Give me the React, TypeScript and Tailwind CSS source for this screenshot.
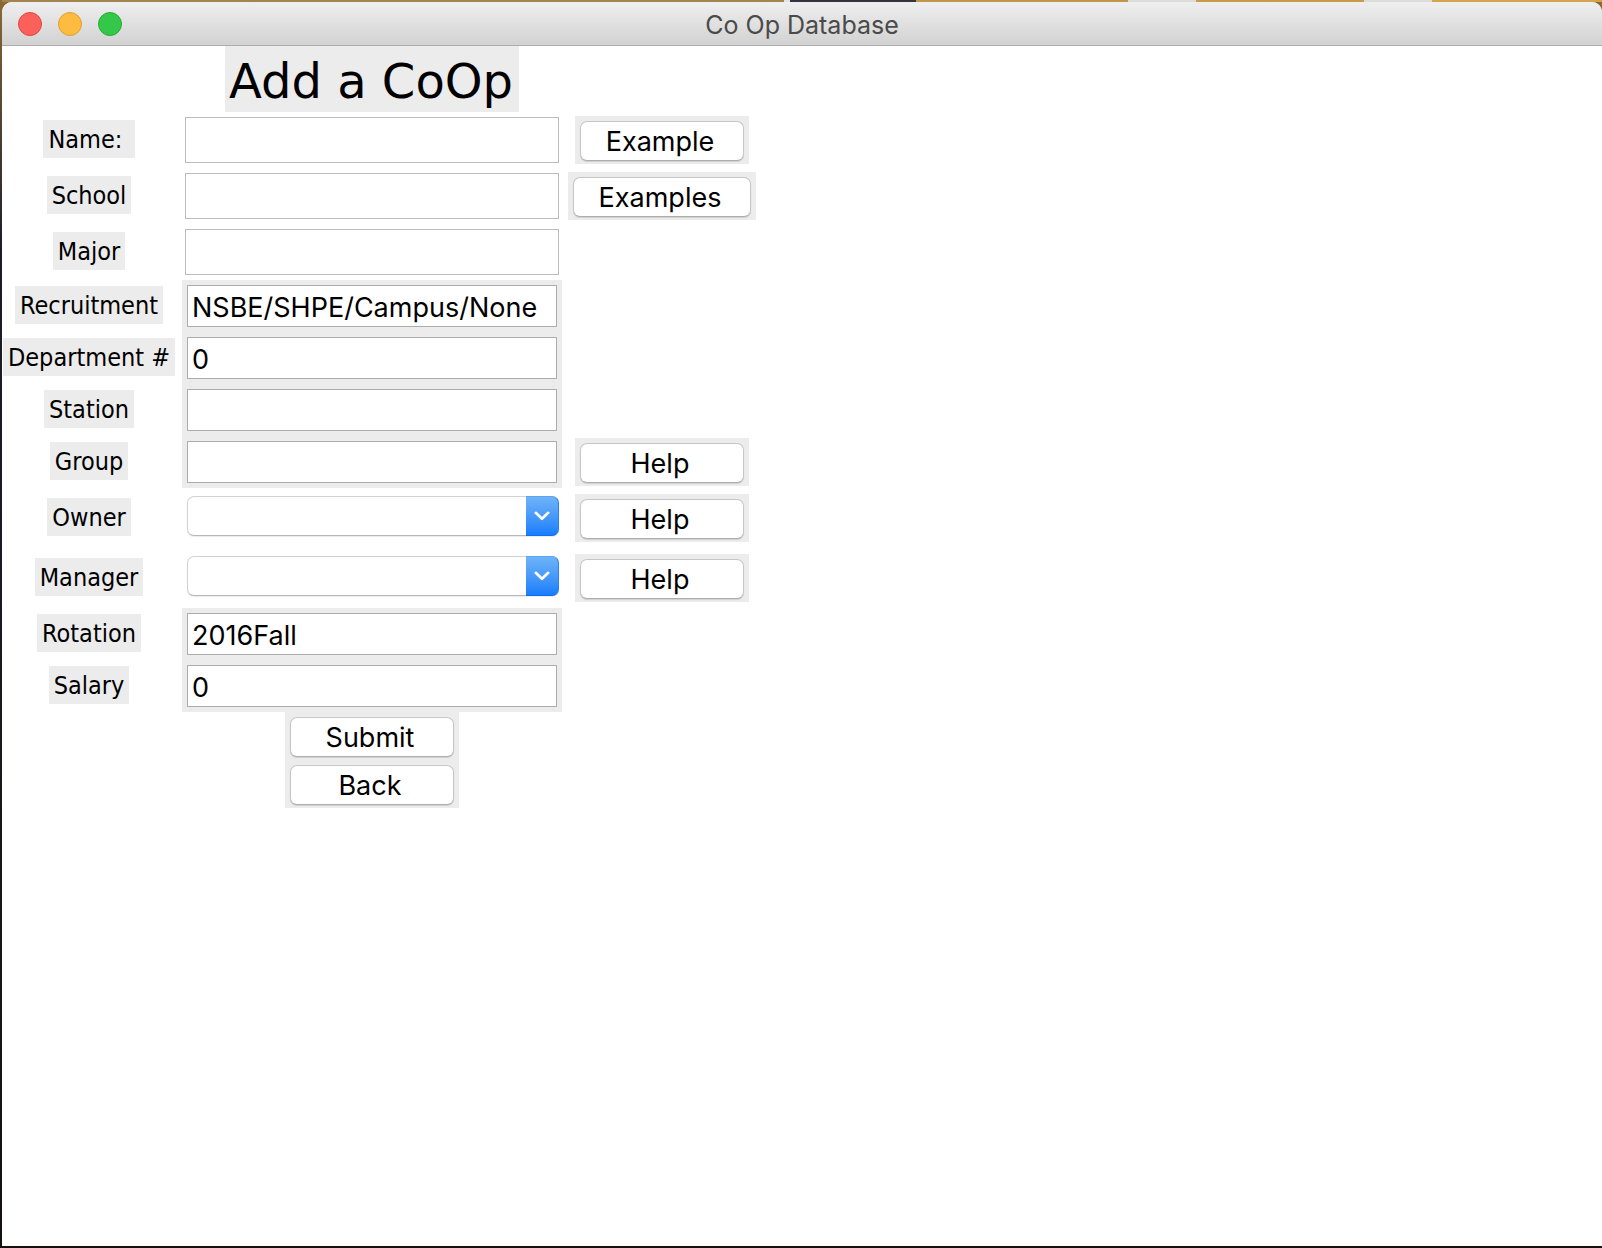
import React from 'react';

type Action = { label: string; wide?: boolean };
type Field = {
  id: string;
  label: string;
  kind: 'plain' | 'entry' | 'combo';
  value?: string;
  action?: Action;
};

const fields: Field[] = [
  { id: 'name', label: 'Name: ', kind: 'plain', action: { label: 'Example' } },
  { id: 'school', label: 'School', kind: 'plain', action: { label: 'Examples', wide: true } },
  { id: 'major', label: 'Major', kind: 'plain' },
  { id: 'recruitment', label: 'Recruitment', kind: 'entry', value: 'NSBE/SHPE/Campus/None' },
  { id: 'department', label: 'Department #', kind: 'entry', value: '0' },
  { id: 'station', label: 'Station', kind: 'entry' },
  { id: 'group', label: 'Group', kind: 'entry', action: { label: 'Help' } },
  { id: 'owner', label: 'Owner', kind: 'combo', action: { label: 'Help' } },
  { id: 'manager', label: 'Manager', kind: 'combo', action: { label: 'Help' } },
  { id: 'rotation', label: 'Rotation', kind: 'entry', value: '2016Fall' },
  { id: 'salary', label: 'Salary', kind: 'entry', value: '0' },
];

const rowHeight = { plain: 'h-14', entry: 'h-13', combo: 'h-15' };

function PushButton({ label, wide }: Action) {
  return (
    <div className={`h-12 bg-[#ececec] px-[5px] pt-[5px] ${wide ? 'w-[188px]' : 'w-[174px]'}`}>
      <button
        type="button"
        className="flex h-10 w-full items-center justify-center rounded-[7px] border border-[#c6c6c6] border-b-[#adadad] bg-white pt-0.5 pr-1 font-[Inter,sans-serif] text-[27px] leading-8 text-black shadow-[0_1px_1px_rgba(0,0,0,0.12)]"
      >
        {label}
      </button>
    </div>
  );
}

function Control({ field }: { field: Field }) {
  if (field.kind === 'combo') {
    return (
      <div className="relative mb-1 ml-[5px] h-10 w-[372px]">
        <select
          id={field.id}
          className="block h-10 w-full appearance-none rounded-[7px] border border-[#d2d2d2] border-b-[#b8b8b8] bg-white px-[5px] font-[Inter,sans-serif] text-[27px] shadow-[0_1px_1px_rgba(0,0,0,0.08)] outline-none"
        >
          <option value=""></option>
        </select>
        <span className="pointer-events-none absolute inset-y-0 right-0 flex w-[33px] items-center justify-center rounded-r-[7px] border-y border-r border-t-[#5ba5f0] border-r-[#2b80f5] border-b-[#0f6cf5] bg-linear-to-b from-[#6fb3f8] to-[#167efc]">
          <svg width="16" height="10" viewBox="0 0 16 10" fill="none" aria-hidden="true">
            <path d="M1.8 1.8 8 7.8l6.2-6" stroke="white" strokeWidth="2.6" strokeLinecap="round" strokeLinejoin="round" />
          </svg>
        </span>
      </div>
    );
  }
  if (field.kind === 'plain') {
    return (
      <input
        id={field.id}
        type="text"
        className="ml-[3px] h-[46px] w-[374px] border border-[#bdbdbd] bg-white px-[5px] font-[Inter,sans-serif] text-[27px] outline-none"
      />
    );
  }
  return (
    <div className="h-13 w-full bg-[#ececec] p-[5px]">
      <input
        id={field.id}
        type="text"
        defaultValue={field.value}
        className="block h-[42px] w-full border border-[#acacac] bg-white px-1 pt-0.5 font-[Inter,sans-serif] text-[27px] text-black outline-none"
      />
    </div>
  );
}

export default function App() {
  return (
    <div className="flex min-h-screen flex-col bg-linear-to-b from-[#8a6a35] from-0% via-[#1d1d28] via-20% to-[#14110f] to-100% pb-0.5 pl-0.5">
      <div className="flex h-0.5 shrink-0" aria-hidden="true">
        <div className="flex-[782] bg-[#a38350]" />
        <div className="flex-[6] bg-[#e4e4e4]" />
        <div className="flex-[126] bg-[#33343f]" />
        <div className="flex-[212] bg-[#c0954c]" />
        <div className="flex-[68] bg-[#dcdcdc]" />
        <div className="flex-[168] bg-[#c89a4c]" />
        <div className="flex-[68] bg-[#dcdcdc]" />
        <div className="flex-[170] bg-[#d3a350]" />
      </div>
      <div className="flex flex-1 flex-col rounded-t-[10px] bg-white">
        <header className="grid h-11 grid-cols-[1fr_auto_1fr] items-center rounded-t-[10px] border-b border-[#adadad] bg-linear-to-b from-[#efefef] to-[#d2d2d2] px-4">
          <div className="flex gap-4">
            <button type="button" aria-label="Close" className="size-6 rounded-full border border-[#e2463f] bg-[#fc605b]" />
            <button type="button" aria-label="Minimize" className="size-6 rounded-full border border-[#dfa033] bg-[#fdbc40]" />
            <button type="button" aria-label="Zoom" className="size-6 rounded-full border border-[#27aa35] bg-[#34c84a]" />
          </div>
          <h1 className="pt-0.5 font-[Inter,sans-serif] text-[25px] leading-8 text-[#4a4a4a]">Co Op Database</h1>
        </header>
        <main className="flex-1 bg-white text-black">
          <form>
            <div className="grid grid-cols-[174px_380px_188px] gap-x-1.5">
              <h2 className="col-start-2 h-[66px] justify-self-center bg-[#ececec] pr-1.5 pl-1 font-['DejaVu_Sans',sans-serif] text-5xl leading-[70px]">
                Add a CoOp
              </h2>
            </div>
            {fields.map((field) => (
              <div
                key={field.id}
                className={`grid grid-cols-[174px_380px_188px] items-center gap-x-1.5 ${rowHeight[field.kind]}`}
              >
                <label
                  htmlFor={field.id}
                  className="mb-0.5 h-[38px] justify-self-center bg-[#ececec] px-[5px] font-['DejaVu_Sans_Condensed','DejaVu_Sans',sans-serif] text-[25px] leading-10 whitespace-pre"
                >
                  {field.label}
                </label>
                <Control field={field} />
                {field.action && (
                  <div className="justify-self-center">
                    <PushButton {...field.action} />
                  </div>
                )}
              </div>
            ))}
            <div className="grid grid-cols-[174px_380px_188px] gap-x-1.5">
              <div className="col-start-2 justify-self-center">
                <PushButton label="Submit" />
                <PushButton label="Back" />
              </div>
            </div>
          </form>
        </main>
      </div>
    </div>
  );
}
